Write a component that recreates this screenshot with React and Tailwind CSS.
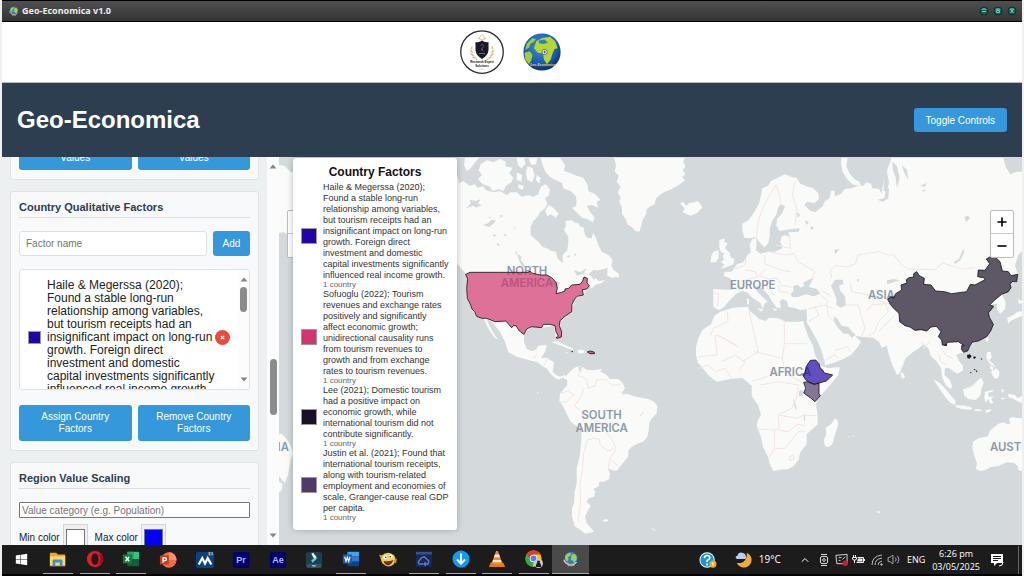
import { useState } from "react";
import { FaWindows } from "react-icons/fa";
import { ChevronUp, Volume2 } from "lucide-react";

const factors = [
  {
    color: "#2204a8",
    text: "Haile & Megerssa (2020); Found a stable long-run relationship among variables, but tourism receipts had an insignificant impact on long-run growth. Foreign direct investment and domestic capital investments significantly influenced real income growth.",
  },
  {
    color: "#d0366f",
    text: "Sofuoglu (2022); Tourism revenues and exchange rates positively and significantly affect economic growth; unidirectional causality runs from tourism revenues to growth and from exchange rates to tourism revenues.",
  },
  {
    color: "#1a1128",
    text: "Lee (2021); Domestic tourism had a positive impact on economic growth, while international tourism did not contribute significantly.",
  },
  {
    color: "#513a6b",
    text: "Justin et al. (2021); Found that international tourism receipts, along with tourism-related employment and economies of scale, Granger-cause real GDP per capita.",
  },
];

// Base land, western half of the canvas
const westLand = [
  "M-20 40L22 62 28 85 40 78 58 92 75 88 82 98 100 94 108 106 130 112 150 108 170 120 182 112 200 112 215 125 235 120 250 126 265 118 272 96 285 88 290 90 300 104 296 122 285 130 292 146 285 160 270 172 262 186 250 198 242 215 242 240 255 252 265 260 278 276 290 280 305 288 318 290 322 310 338 325 338 300 352 285 355 262 355 245 342 226 348 212 346 198 365 195 372 202 385 205 392 216 400 215 405 240 412 248 425 250 430 233 440 255 446 272 455 290 475 300 488 315 485 328 470 340 445 346 430 345 415 358 424 362 430 374 438 370 445 378 465 376 455 385 440 388 425 400 417 392 400 420 375 432 365 470 330 500 335 545 318 550 312 512 275 518 245 515 222 538 222 560 230 582 245 588 258 584 265 572 290 570 287 586 278 602 272 610 290 608 312 622 308 650 318 660 330 665 345 660 356 668 350 674 338 668 326 674 314 668 300 655 292 642 278 634 262 622 246 618 225 612 200 605 175 592 165 560 150 530 125 500 108 490 80 485 60 450 50 425 52 370 47 355 35 342 25 330 10 318-20 300Z",
  "M100 488L110 492 118 512 128 530 138 545 147 556 134 548 122 532 112 515Z",
  "M45 8L88 8 75 22 62 40 50 48 42 30Z",
  "M92 28L110 16 130 22 150 12 168 20 166 34 188 38 178 55 190 68 184 82 168 92 160 108 146 102 128 108 118 94 98 88 84 72 96 60 86 46Z",
  "M200 8L222 8 226 28 214 40 204 30ZM232 34L248 40 254 62 246 82 232 74 228 54ZM200 52L216 60 214 80 200 74ZM236 10L262 8 258 28 244 30ZM204 88L222 92 218 104 206 100ZM260 60L272 68 268 86 258 76Z",
  "M272 8L330 8 345 30 342 48 362 55 380 62 400 68 412 88 415 108 436 118 452 134 440 140 444 158 426 150 410 152 420 170 434 188 428 202 412 192 396 188 378 170 366 158 380 146 378 124 362 108 340 100 336 84 318 76 300 66 286 50 278 30Z",
  "M296 150L310 158 326 176 318 188 302 178 292 184 286 166Z",
  "M472 340L482 325 490 345 505 355 507 368 495 365 488 370 472 362Z",
  "M492 8L498 30 494 50 506 62 500 80 512 95 503 112 512 128 508 140 516 158 516 176 528 194 532 208 548 218 556 228 568 230 574 212 578 195 588 178 590 162 604 152 614 148 618 130 632 118 645 110 665 102 690 88 705 76 696 66 706 58 698 46 706 36 700 20 704 8Z",
  "M690 145L700 140 708 152 718 144 732 142 742 138 750 145 757 158 740 175 722 182 708 176 698 172 704 160Z",
  "M305 560L325 558 345 570 368 580 372 586 350 580 335 572 315 566ZM385 585L398 584 406 592 392 596 382 592ZM346 592L356 593 352 596Z",
  "M350 660L366 644 378 636 392 632 390 646 398 636 410 644 430 646 455 642 452 650 470 660 480 672 505 672 518 684 525 700 514 716 530 716 548 722 562 726 595 732 612 740 622 752 620 775 606 790 598 802 597 822 592 845 580 860 562 866 545 876 536 885 534 905 518 925 500 947 486 946 474 940 480 955 478 972 462 980 448 980 446 994 430 1002 436 1010 432 1025 416 1030 410 1040 422 1052 412 1070 405 1085 410 1104 432 1130 405 1136 388 1122 375 1115 366 1085 366 1060 372 1045 374 1010 380 985 380 940 390 900 394 850 395 820 378 812 362 800 350 776 340 756 328 738 330 716 340 704 352 690Z",
  "M458 1095L470 1092 476 1097 462 1101ZM604 1118L614 1124 616 1129 606 1122ZM262 710L266 714 262 716Z",
  "M808 255L825 250 822 262 833 264 825 280 838 292 843 308 853 312 850 328 832 335 812 342 824 328 812 322 822 314 818 302 824 296 812 290 808 275ZM790 290L806 286 806 310 797 322 781 322 784 302Z",
  "M-515 30L-498 32-484 44-478 52-440 48-440 232-485 238-500 232-515 234Z",
  "M-515 838L-505 836-492 850-478 872-470 895-478 915-486 960-496 985-515 960ZM-513 980L-502 986-506 1008-513 1012Z",
];

// Base land, eastern half
const eastLand = [
  "M-65 402L-10 405-5 385-15 370-35 362-30 350-10 350 6 328 25 322 38 300 48 292 44 268 52 252 62 250 66 268 62 285 76 296 100 290 60 246 45 250 28 248 22 225 22 206 40 196 50 182 60 168 72 145 78 120 82 100 100 92 108 78 128 68 150 58 170 66 184 68 196 86 215 94 235 100 250 115 252 132 238 145 216 140 208 150 226 168 240 172 262 155 270 138 284 130 288 108 298 106 300 124 318 116 330 102 348 100 365 94 385 92 395 82 408 86 412 100 432 102 440 116 448 60 462 30 470 8 805 8 812 36 826 58 845 50 867 50 867 282 850 300 840 330 848 358 845 380 825 388 824 406 800 418 812 440 810 462 796 476 786 464 786 446 772 448 766 462 758 475 775 508 755 545 730 558 708 570 695 592 678 594 664 600 672 618 684 632 684 645 668 656 654 648 640 638 630 640 628 660 645 676 652 696 646 702 632 690 622 668 618 640 606 620 588 604 580 580 566 568 548 582 530 594 512 610 500 640 494 655 486 660 472 630 462 600 455 572 440 578 432 560 415 548 385 546 360 542 378 560 370 574 350 598 325 612 300 622 268 632 256 600 240 570 226 540 214 510 216 490 214 462 196 466 178 458 160 456 156 438 142 432 134 440 138 458 125 458 112 440 100 420 84 402 68 392 62 402 74 418 98 440 88 446 84 462 76 444 52 428 36 412 22 408 4 416-20 440-32 455-48 466-65 456Z",
  "M320 8L338 8 334 34 344 56 358 72 374 82 378 94 352 88 334 70 322 48 318 24Z",
  "M-6 458L40 455 46 470 60 480 72 492 92 498 102 488 130 490 152 500 190 500 206 498 210 516 222 545 236 572 240 598 262 634 280 640 314 636 310 660 292 682 275 702 250 730 243 748 248 780 248 808 232 822 215 838 215 868 196 892 190 915 175 934 160 942 135 944 115 948 104 926 100 908 84 875 78 845 65 812 68 796 78 780 70 752 50 722 50 692 36 680 22 668-15 672-55 680-78 662-92 645-112 622-117 600-117 575-110 550-98 525-72 508-62 482-44 470Z",
  "M300 790L308 796 310 808 300 840 292 868 282 876 270 874 266 856 274 838 272 818 288 808Z",
  "M498 650L506 656 510 666 504 672 497 664Z",
  "M596 674L612 682 630 700 648 722 662 738 660 750 644 742 628 722 610 696ZM662 750L690 752 712 758 708 764 680 762 662 756ZM720 762L742 764 738 768 720 768ZM752 766L770 762 764 770 752 774Z",
  "M740 668L746 684 740 700 736 722 722 735 700 732 688 722 684 702 704 698 718 688 730 674Z",
  "M750 710L778 704 772 710 758 714 762 726 776 724 768 732 776 744 766 746 760 732 752 744 748 726ZM800 700L806 706 804 716 800 708ZM798 728L812 730 800 734Z",
  "M756 590L768 592 770 608 762 616 776 628 784 640 776 634 764 626 754 610ZM768 650L784 640 794 652 790 668 780 672 772 660ZM766 630L776 638 772 648 766 640Z",
  "M820 716L840 720 848 730 867 720 867 745 850 740 836 732 820 726Z",
  "M756 544L762 552 756 562 750 552ZM816 490L836 480 848 470 867 468 867 480 852 486 826 498 820 506ZM848 430L858 438 867 430 867 445 852 446Z",
  "M714 860L730 850 758 844 766 826 775 818 790 806 806 802 816 808 826 806 822 792 832 786 850 790 867 788 867 950 850 945 848 934 838 924 815 922 792 932 766 936 752 945 735 948 722 942 726 926 716 895 712 878Z",
  "M426 1068L436 1070 430 1076ZM340 844L346 846 342 848ZM352 840L358 842 354 845Z",
  "M112 458L128 464 120 468ZM66 460L84 462 80 470ZM36 430L42 432 42 448 36 448Z",
];

// Enclosed seas, lakes and gulfs of the eastern half
const eastWater = [
  "M86 280L100 264 104 244 104 222 112 196 124 180 130 156 138 148 150 154 142 174 126 192 124 212 134 228 170 222 194 220 192 230 160 232 164 246 150 240 140 244 136 258 142 280 120 290 98 290 76 292 66 278 64 262 72 270Z",
  "M166 418L176 408 174 392 190 390 196 398 208 392 204 384 220 374 236 370 226 386 222 396 246 402 256 416 236 424 212 418 190 426 172 426Z",
  "M288 392L300 374 322 374 326 386 312 392 316 408 330 424 332 450 318 458 304 450 304 430 296 410Z",
  "M296 484L306 490 320 512 340 516 352 530 362 540 350 548 340 536 326 536 310 520 298 502Z",
  "M205 502L214 500 226 520 244 552 258 582 268 618 270 634 258 634 240 600 234 572 218 540Z",
  "M448 8L462 8 456 50 462 82 456 110 446 108 446 78 442 40ZM472 20L486 34 494 68 486 100 482 68 474 46ZM500 30L516 44 520 74 508 54Z",
  "M428 134L448 130 454 100 462 100 460 130 444 140Z",
  "M655 322L672 312 682 288 688 280 686 296 676 316 662 326Z",
  "M210 196L222 202 214 210ZM226 212L238 220 228 224ZM186 172L196 180 188 188Z",
  "M456 376L476 372 494 376 476 382 456 388ZM366 372L374 374 368 382ZM298 284L314 282 300 298ZM556 92L574 84 570 96ZM560 106L574 104 566 110ZM688 186L700 182 704 190 694 202Z",
  "M192 708L202 704 204 722 192 724ZM174 730L180 740 186 766 180 760ZM206 776L210 780 210 800 206 794Z",
];

const westWater = [
  "M48 160L62 146 60 134 78 138 92 132 84 146 96 150 78 158 70 152Z",
  "M98 210L116 204 124 194 138 196 130 206 118 216Z",
  "M128 238L140 240 132 246ZM140 264L152 270 142 272ZM160 236L172 240 164 244ZM192 210L198 222 194 220ZM150 180L158 182 152 190ZM116 185L124 186 118 190Z",
  "M202 296L214 304 212 316 222 326 226 338 216 334 208 318ZM196 288L202 292 198 300Z",
  "M330 152L352 140 372 142 380 154 360 160 352 170 342 186 328 174ZM302 100L318 112 310 140 302 130Z",
  "M300 376L330 382 322 400 312 392ZM372 296L380 298 374 304ZM350 304L362 300 356 308Z",
  "M372 344L390 352 410 340 400 356 380 362Z",
  "M386 634L394 638 390 652 386 646ZM518 708L530 712 520 720ZM568 784L584 768 576 780Z",
];

const westBorders =
  "M402 640L382 660 410 672 414 700 436 692 440 674 470 674 486 690 512 690M400 700L396 720 374 752 394 770 402 800 412 836M332 716L352 708 372 720 350 740 330 742M436 796L462 808 470 834 490 860 498 884 480 910 474 938M408 856L430 850 448 852 450 870 474 888 492 880M412 856L400 900 398 940 390 990 392 1040 384 1100M480 912L504 932M262 596L252 612M292 612L282 632M790 412L806 416 802 456M832 470L834 500 790 520 780 545M800 540L860 570";
const eastBorders =
  "M-52 540L10 576M-60 540L-54 600-110 605M-110 640L-80 630-60 650-30 640-10 670M-40 620L0 600 30 620 10 650M40 460L54 520 70 590 20 620M148 500L148 566 216 566M148 570L142 610 60 590M142 610L150 650 110 660 50 680M160 660L200 680M76 690L130 680 190 690 184 730 170 760 150 770 130 780 132 820 120 825 64 822M132 780L184 790 210 780 246 782M118 826L118 880 104 906M118 880L150 880 190 830 210 830M130 825L160 830 186 808 210 812M162 908L174 900 178 912 166 916ZM66 256L66 230 72 190 88 150 110 110 124 90M124 90L136 128 136 148M180 210L186 160 172 120 180 80M0 342L30 330 34 310M30 345L60 350 68 366 20 378M90 300L90 326 140 346 168 350M100 290L150 300 176 296 190 320 240 350 230 372M124 270L166 280 164 240M90 344L72 362 100 372 128 370 140 392 170 396M100 372L96 400 120 420M130 392L134 410 160 412M256 404L290 424M256 418L280 440 272 450 292 460M220 462L240 456 276 450 280 484 300 500M240 456L252 480 220 500M290 370L286 346 300 332 340 336 362 326 368 300 430 290 460 300 478 300 500 330 520 342M346 384L350 410 400 420 440 440 470 450M330 450L370 450 378 480 390 520 380 545M390 470L410 450 450 446 460 470 430 500 420 530 400 545M430 530L460 500 480 480M520 342L600 344 622 324 680 342 720 338M240 630L300 600 312 610M300 585L340 575 346 590M560 560L568 580 584 560M620 580L632 600 654 610M612 600L616 620 636 630M690 700L710 692 724 680";

function MapCanvas() {
  return (
    <svg
      className="absolute inset-0 h-full w-full"
      viewBox="-513 6 2229 1164"
      preserveAspectRatio="xMidYMid slice"
      role="img"
      aria-label="World map"
    >
      <rect x="-1000" y="-500" width="4000" height="2400" fill="#d4dadc" />
      <g fill="#fafaf8" strokeLinejoin="round">
        {westLand.map((d) => (
          <path key={d} d={d} />
        ))}
        <g transform="translate(855 0)">
          {eastLand.map((d) => (
            <path key={d} d={d} />
          ))}
        </g>
      </g>
      <g fill="#d4dadc">
        {westWater.map((d) => (
          <path key={d} d={d} />
        ))}
        <g transform="translate(855 0)">
          {eastWater.map((d) => (
            <path key={d} d={d} />
          ))}
        </g>
      </g>
      <g fill="none" stroke="#f3e4e4" strokeWidth="3" strokeLinejoin="round">
        <path d={westBorders} />
        <path d={eastBorders} transform="translate(855 0)" />
      </g>

      <g className="font-['Inter',sans-serif] font-semibold" fontSize="34" fill="#8a9ba8" textAnchor="middle">
        <text x="231" y="359">NORTH</text>
        <text x="231" y="397">AMERICA</text>
        <text x="455" y="792">SOUTH</text>
        <text x="455" y="830">AMERICA</text>
        <text x="908" y="401">EUROPE</text>
        <text x="1294" y="433">ASIA</text>
        <text x="1021" y="664">AFRICA</text>
        <text x="1620" y="889" textAnchor="start">AUSTRALIA</text>
        <text x="-483" y="889" textAnchor="end">AUSTRALIA</text>
      </g>

      {/* Countries with an assigned factor */}
      <g stroke="#111" strokeWidth="3" strokeOpacity="0.8" fillOpacity="0.7" strokeLinejoin="round">
        <g fill="#d0366f">
          <path d="M47 358L60 352 235 352 240 348 245 354 270 360 290 360 305 368 318 382 322 400 318 416 335 412 345 408 345 402 356 400 365 390 390 388 398 378 402 366 412 370 411 384 418 392 410 402 397 404 400 420 382 424 375 430 366 448 365 470 345 484 330 497 328 512 335 530 334 546 322 550 318 548 325 544 318 530 315 512 300 508 280 508 275 518 245 515 230 522 222 538 208 528 198 512 190 512 185 518 176 508 168 498 135 500 110 490 96 490 80 484 74 470 66 462 62 450 52 430 50 400 53 372Z" />
          <path d="M412 591L420 588 432 591 434 596 420 596Z" />
        </g>
        <path
          fill="#1a1128"
          transform="translate(855 0)"
          d="M458 433L466 426 478 426 482 416 500 405 498 390 516 384 514 374 522 368 536 366 536 356 545 350 553 362 568 370 566 388 588 390 602 408 628 410 650 416 695 410 706 388 720 390 750 374 746 368 728 365 730 345 750 346 764 326 754 312 766 305 782 307 795 320 802 348 820 350 828 362 848 358 845 380 832 380 825 388 828 398 820 410 800 418 778 436 764 450 776 454 770 462 760 474 764 488 775 508 768 526 755 545 730 558 712 562 704 574 698 588 686 592 680 584 680 572 688 572 670 560 636 562 634 572 622 570 620 555 610 545 618 530 604 514 588 516 575 528 558 524 540 526 525 516 510 512 494 500 492 475 478 462 466 448Z"
        />
        <path
          fill="#2204a8"
          transform="translate(855 570)"
          d="M226 46L242 45 252 56 256 70 262 74 268 84 293 90 274 108 252 114 238 118 224 114 212 104 203 90 210 82 214 64Z"
        />
        <path
          fill="#513a6b"
          transform="translate(855 570)"
          d="M206 112L220 110 238 118 252 114 252 146 256 152 240 170 226 158 206 144 212 130Z"
        />
      </g>
      <g fill="#1c1826" transform="translate(855 0)">
        <path d="M696 600l8-2 6 5-6 8-7-2zM714 606l6-2 3 4-6 4zM737 610l5 1-2 4zM706 650l4 2-3 4zM715 644l5-3 1 5zM722 646l6 2-4 4zM628 568l8 0-2 5z" />
        <path d="M-490 588l4 0-1 4-4-1z" />
      </g>
    </svg>
  );
}

function GlobeIcon({ className }) {
  return (
    <svg className={className} viewBox="0 0 20 20" aria-hidden="true">
      <circle cx="10" cy="9" r="8" fill="#2f7fd0" />
      <path d="M3 6c2-3 5-4 7-3l-1 3-3 2 1 3-2 2c-2-1-3-4-2-7zM11 4l4 0 2 3 0 4-3 4-2-3-2-1 0-3z" fill="#a5cf4a" />
      <path d="M1 11c2 6 11 9 16 3" fill="none" stroke="#d9dde0" strokeWidth="1.4" />
      <path d="M6 18h8" stroke="#c9a24a" strokeWidth="2" />
    </svg>
  );
}

function TitleBar() {
  const dots = [
    { label: "Minimize", d: "M3 5.5h4" },
    { label: "Maximize", d: "M3.5 4.5h3v2h-3z" },
    { label: "Close", d: "M3.5 3.5l3 3.5M6.5 3.5l-3 3.5" },
  ];
  return (
    <div className="flex h-[22px] shrink-0 items-center border-y border-black bg-linear-to-b from-[#505050] to-[#343434] pr-[5px] pl-[7px]">
      <GlobeIcon className="mr-[3px] size-[10px]" />
      <span className="font-['Noto_Sans',sans-serif] text-[9px] font-bold text-[#ececec]">Geo-Economica v1.0</span>
      <div className="ml-auto flex gap-1">
        {dots.map((dot) => (
          <button key={dot.label} aria-label={dot.label} className="size-[10px]">
            <svg viewBox="0 0 10 10" className="size-full">
              <circle cx="5" cy="5" r="4" fill="#14604f" stroke="#0b2f2a" />
              <path d="M2 3.5a4 3 0 0 1 6 0z" fill="#a8e3d5" />
              <path d={dot.d} stroke="#6fd3bd" strokeWidth="1" fill="none" />
            </svg>
          </button>
        ))}
      </div>
    </div>
  );
}

function Logos() {
  return (
    <div className="flex h-[60px] shrink-0 items-center justify-center gap-[19px] bg-white pr-[3px]">
      <svg className="size-[44px]" viewBox="0 0 88 88" role="img" aria-label="Research Expert Solutions">
        <circle cx="44" cy="44" r="42.5" fill="#fff" stroke="#26262c" strokeWidth="2.5" />
        <g fill="none" stroke="#e2bd8d" strokeWidth="3" strokeLinecap="round">
          <path d="M24 34c-4 10 0 20 10 25M64 34c4 10 0 20-10 25" strokeDasharray="3 4" />
          <path d="M20 40l6 5M21 48l7 3M25 55l7 1M68 40l-6 5M67 48l-7 3M63 55l-7 1" strokeWidth="2" />
          <path d="M38 18l3-6 3-3 3 3 3 6M36 16l8 4 8-4" strokeWidth="2" />
        </g>
        <path d="M31 24q7 2 13-3 6 5 13 3v16q-1 11-13 18-12-7-13-18z" fill="#1b1a22" />
        <path d="M41 31l4-3 2 5-4 6 3 4" fill="none" stroke="#5a55b5" strokeWidth="1.5" />
        <path d="M43 38l3 2" stroke="#d4485c" strokeWidth="2" />
        <path d="M39 47h2M43 47h2M47 47h2" stroke="#e2bd8d" strokeWidth="2" />
        <g className="font-['Liberation_Sans',sans-serif] font-bold" fontSize="6" textAnchor="middle" fill="#111">
          <text x="44" y="66">Research Expert</text>
          <text x="44" y="73">Solutions</text>
        </g>
        <path d="M41 78h6" stroke="#efa0bb" strokeWidth="1.5" />
      </svg>
      <svg className="size-[38px]" viewBox="0 0 100 100" role="img" aria-label="Geo-Economica logo">
        <defs>
          <radialGradient id="sea" cx="0.45" cy="0.35" r="0.65">
            <stop offset="0" stopColor="#3d92dc" />
            <stop offset="0.7" stopColor="#175ab0" />
            <stop offset="1" stopColor="#0c2f66" />
          </radialGradient>
        </defs>
        <circle cx="50" cy="50" r="49" fill="url(#sea)" />
        <path d="M35 22l16-9 20-3 14 12 6 18-8 2-6 14-4 14-10 12-8-12-2-16-14-2-10-12z" fill="#b6d732" />
        <path d="M10 28l14-14 10 2-6 8-8 4-4 10-10 6zM4 52l14-4 7 10-3 14-6 10-10-12z" fill="#a3cd30" />
        <path d="M42 20l14-3 10 8-12 4-12-2z" fill="#2c7fc8" />
        <circle cx="57" cy="50" r="7" fill="#e8edf2" stroke="#4b5a66" strokeWidth="2" />
        <path d="M57 46v8M54 50h6" stroke="#34414c" strokeWidth="2" />
        <text x="52" y="86" fontSize="9" textAnchor="middle" fill="#f1cf62" className="font-['Liberation_Sans',sans-serif] font-bold">
          Geo-Economica
        </text>
      </svg>
    </div>
  );
}

function Card({ title, children }) {
  return (
    <section className="rounded-[3px] border border-[#dfe3e6] bg-[#f8f9fb] px-2 py-[9px]">
      {title && (
        <h2 className="mb-[13px] border-b border-[#dcdfe2] pb-[3px] text-[11px] leading-[13px] font-bold text-[#2c3e50]">{title}</h2>
      )}
      {children}
    </section>
  );
}

function BlueButton({ children }) {
  return (
    <button className="h-9 flex-1 rounded-[3px] bg-[#3498db] px-4 text-[10px] leading-3 text-white hover:bg-[#2980b9]">
      {children}
    </button>
  );
}

function Arrow({ up }) {
  return (
    <svg viewBox="0 0 8 5" className="h-[5px] w-2" aria-hidden="true">
      <path d={up ? "M0.5 4.5h7L4 0.5z" : "M0.5 0.5h7L4 4.5z"} fill="#858585" />
    </svg>
  );
}

function FactorList() {
  return (
    <div className="mb-[15px] flex h-[121px] overflow-hidden rounded-[3px] border border-[#dfe3e6] bg-white">
      <ul className="flex-1 px-2 pt-[9px]">
        {factors.slice(0, 1).map((f) => (
          <li key={f.text} className="flex items-center">
            <span className="mr-1.5 size-[13px] shrink-0 border border-[#999]" style={{ background: f.color }} />
            <span className="flex-1 text-xs leading-[13px] text-[#222]">{f.text}</span>
            <button aria-label="Remove factor" className="flex size-[15px] shrink-0 items-center justify-center rounded-full bg-[#e74c3c]">
              <svg viewBox="0 0 6 6" className="size-[5px]">
                <path d="M1 1l4 4M5 1l-4 4" stroke="#fff" strokeWidth="1.5" />
              </svg>
            </button>
          </li>
        ))}
      </ul>
      <div className="flex w-[11px] flex-col items-center bg-[#fcfcfc] py-[7px]">
        <Arrow up />
        <div className="mt-[5px] h-[25px] w-[7px] rounded-full bg-[#8b8b8b]" />
        <div className="mt-auto">
          <Arrow />
        </div>
      </div>
    </div>
  );
}

function Sidebar() {
  const [name, setName] = useState("");
  const [category, setCategory] = useState("");

  return (
    <aside className="flex w-[277px] shrink-0 bg-[#ecf0f1]">
      <div className="flex-1 overflow-hidden px-2">
        <div className="-mt-[33px] flex flex-col gap-[11px]">
          <Card>
            <div className="flex gap-1.5">
              <BlueButton>Assign Country Values</BlueButton>
              <BlueButton>Remove Country Values</BlueButton>
            </div>
          </Card>

          <Card title="Country Qualitative Factors">
            <div className="mb-[13px] flex gap-1.5">
              <input
                aria-label="Factor name"
                placeholder="Factor name"
                value={name}
                onChange={(e) => setName(e.target.value)}
                className="h-[25px] min-w-0 flex-1 rounded-[3px] border border-[#dddfe2] bg-white px-1.5 text-[10px] placeholder:text-[#757575]"
              />
              <button className="h-[25px] w-[37px] rounded-[3px] bg-[#3498db] text-[10px] text-white">Add</button>
            </div>
            <FactorList />
            <div className="flex gap-1.5">
              <BlueButton>Assign Country Factors</BlueButton>
              <BlueButton>Remove Country Factors</BlueButton>
            </div>
          </Card>

          <Card title="Region Value Scaling">
            <input
              aria-label="Value category"
              placeholder="Value category (e.g. Population)"
              value={category}
              onChange={(e) => setCategory(e.target.value)}
              className="mb-1.5 block h-4 w-full rounded-[1px] border border-[#767676] bg-white px-0.5 text-[10px] placeholder:text-[#757575]"
            />
            <div className="flex items-center text-[10px] text-[#222]">
              <label htmlFor="min-color">Min color</label>
              <input id="min-color" type="color" defaultValue="#ffffff" className="mr-[7px] ml-[3px] h-[27px] w-[25px] border border-[#d5d5d5] bg-[#efefef]" />
              <label htmlFor="max-color">Max color</label>
              <input id="max-color" type="color" defaultValue="#0000ff" className="ml-[3px] h-[27px] w-[25px] border border-[#d5d5d5] bg-[#efefef]" />
            </div>
          </Card>
        </div>
      </div>
      <div className="flex w-3 flex-col items-center bg-[#fbfbfb] py-[7px]">
        <Arrow up />
        <div className="mt-[190px] h-14 w-[7px] rounded-full bg-[#8b8b8b]" />
        <div className="mt-auto">
          <Arrow />
        </div>
      </div>
    </aside>
  );
}

function Legend() {
  return (
    <div className="absolute top-px left-3.5 w-[164px] rounded-[3px] bg-white px-2 pt-1.5 pb-2 shadow-[0_0_6px_rgba(0,0,0,0.25)]">
      <h2 className="mb-0.5 text-center text-xs leading-4 font-bold text-[#111]">Country Factors</h2>
      <ul>
        {factors.map((f) => (
          <li key={f.text} className="flex items-center gap-1.5">
            <span className="size-4 shrink-0 border border-[#999]" style={{ background: f.color }} />
            <div className="flex-1 text-[9px] leading-[11px] text-[#333]">
              <p>{f.text}</p>
              <p className="text-[8px] leading-2 text-[#666]">1 country</p>
            </div>
          </li>
        ))}
      </ul>
    </div>
  );
}

function ZoomControl({ className }) {
  return (
    <div className={`absolute top-[53px] flex w-6 flex-col rounded-[2px] border border-[#b9bdbe] bg-white ${className}`}>
      <button aria-label="Zoom in" className="flex h-[23px] items-center justify-center border-b border-[#ccc]">
        <svg viewBox="0 0 10 10" className="size-[10px]">
          <path d="M0.5 5h9M5 0.5v9" stroke="#000" strokeWidth="1.6" />
        </svg>
      </button>
      <button aria-label="Zoom out" className="flex h-[23px] items-center justify-center">
        <svg viewBox="0 0 10 10" className="size-[10px]">
          <path d="M0.5 5h9" stroke="#000" strokeWidth="1.6" />
        </svg>
      </button>
    </div>
  );
}

const apps = [
  {
    label: "File Explorer",
    open: true,
    icon: (
      <>
        <path d="M1 3h7l2 2h8v13H1z" fill="#e9a825" />
        <path d="M1 7h17v10H1z" fill="#fcd667" />
        <path d="M4 18v-6q0-1.5 1.5-1.5h8q1.5 0 1.5 1.5v6h-3v-4H7v4z" fill="#3c8fd6" />
      </>
    ),
  },
  {
    label: "Opera",
    open: true,
    icon: (
      <>
        <circle cx="10" cy="10" r="9" fill="#e8192c" />
        <ellipse cx="10" cy="10" rx="4" ry="6.5" fill="#1c1c1c" />
        <path d="M13 3.5q6 6 0 13 6-2 6-6.5t-6-6.5z" fill="#a70014" />
      </>
    ),
  },
  {
    label: "Excel",
    open: true,
    icon: (
      <>
        <path d="M6 2h13v8H6z" fill="#33c481" />
        <path d="M6 2h7v8H6z" fill="#21a366" />
        <path d="M6 10h13v8H6z" fill="#185c37" />
        <path d="M1 5h10v10H1z" fill="#107c41" />
        <path d="M4 7.5l4 5M8 7.5l-4 5" stroke="#fff" strokeWidth="1.5" />
      </>
    ),
  },
  {
    label: "PowerPoint",
    icon: (
      <>
        <circle cx="11" cy="10" r="8.5" fill="#ed6c47" />
        <path d="M11 1.5A8.5 8.5 0 0 1 19.5 10H11z" fill="#ff8f6b" />
        <path d="M1 5h10v10H1z" fill="#c43e1c" />
        <path d="M4.5 13V7.5h2q1.8 0 1.8 1.6t-1.8 1.6h-2" stroke="#fff" strokeWidth="1.5" fill="none" />
      </>
    ),
  },
  {
    label: "Maps",
    icon: (
      <>
        <rect x="0" y="1" width="20" height="18" rx="2" fill="#0b3f87" />
        <path d="M3 15l4-7 3 6 3-6 4 7" stroke="#fff" strokeWidth="2.5" fill="none" />
        <path d="M14 1h2v4h-2z" fill="#f2a83b" />
        <path d="M17 1h2v4h-2z" fill="#4aa6ef" />
      </>
    ),
  },
  {
    label: "Premiere Pro",
    icon: (
      <>
        <rect x="1" y="1" width="18" height="18" rx="3" fill="#00006b" />
        <text x="10" y="13" fontSize="10" textAnchor="middle" fill="#b3b3ff" className="font-semibold">Pr</text>
      </>
    ),
  },
  {
    label: "After Effects",
    icon: (
      <>
        <rect x="1" y="1" width="18" height="18" rx="3" fill="#00006b" />
        <text x="10" y="13" fontSize="10" textAnchor="middle" fill="#b3b3ff" className="font-semibold">Ae</text>
      </>
    ),
  },
  {
    label: "Filmora",
    icon: (
      <>
        <rect x="1" y="1" width="18" height="18" rx="3" fill="#1f3d50" />
        <path d="M7 3l2-1 4 5-3 2z" fill="#eafcf8" />
        <path d="M13 7l0 2-5 4-1-3z" fill="#4ddcc4" />
        <path d="M2 14.5h16v2q0 2-2 2H4q-2 0-2-2z" fill="#2f566b" />
        <path d="M8 16.5h4" stroke="#cde" strokeWidth="1.2" />
      </>
    ),
  },
  {
    label: "Word",
    open: true,
    icon: (
      <>
        <path d="M6 2h13v5H6z" fill="#41a5ee" />
        <path d="M6 7h13v6H6z" fill="#2b7cd3" />
        <path d="M6 13h13v5H6z" fill="#103f91" />
        <path d="M1 5h10v10H1z" fill="#185abd" />
        <path d="M3 7.5l1.5 5L6 8l1.5 4.5 1.5-5" stroke="#fff" strokeWidth="1.3" fill="none" />
      </>
    ),
  },
  {
    label: "Smiley",
    icon: (
      <>
        <path d="M3 5q7-6 14 0 3 5-1 10-6 5-12-1-3-4-1-9z" fill="#e8cf5e" />
        <path d="M0 4l4 1-2 4zM16 11l4-3-1 6z" fill="#c9962e" />
        <circle cx="7" cy="7" r="2.2" fill="#fff" />
        <circle cx="13" cy="6" r="2.2" fill="#fff" />
        <circle cx="7.5" cy="7" r="0.9" fill="#222" />
        <circle cx="12.5" cy="6.5" r="0.9" fill="#222" />
        <path d="M5 11q6 1 11-1-2 6-6 6-4-1-5-5z" fill="#7c2d18" />
      </>
    ),
  },
  {
    label: "Cloud Sync",
    open: true,
    icon: (
      <>
        <path d="M1 2h18v17H1z" fill="#1c2557" />
        <path d="M1 2h18v3H1z" fill="#34508d" />
        <path d="M9 15.5H4.5l-1-2 4-5 3-1 5 5-1 3h-4M12 13.5l-2 2 2 2" stroke="#5a80b6" strokeWidth="1.5" fill="none" />
      </>
    ),
  },
  {
    label: "Downloader",
    open: true,
    icon: (
      <>
        <circle cx="10" cy="10" r="9.5" fill="#0f9bf7" />
        <path d="M10 4v11M5.5 10.5L10 15l4.5-4.5" stroke="#fff" strokeWidth="2.2" fill="none" />
      </>
    ),
  },
  {
    label: "VLC",
    open: true,
    icon: (
      <>
        <path d="M3 14h14l2 5H1z" fill="#e8780c" />
        <path d="M9 1h2l5 14q-6 3-12 0z" fill="#f58a1f" />
        <path d="M7.6 5h4.8l1 3H6.6zM5.6 11h8.8l0.8 2.5H4.8z" fill="#eee" />
      </>
    ),
  },
  {
    label: "Chrome",
    open: true,
    icon: (
      <>
        <circle cx="9.5" cy="9.5" r="9" fill="#fbc116" />
        <path d="M1.7 5A9 9 0 0 1 17.3 5H9.5L5.5 11.5z" fill="#e33b2e" />
        <path d="M1.7 5l4 7 4 1.5-1.5 5A9 9 0 0 1 1.7 5z" fill="#2da94f" />
        <circle cx="9.5" cy="9.5" r="4.2" fill="#fff" />
        <circle cx="9.5" cy="9.5" r="3.3" fill="#4285f4" />
        <circle cx="15" cy="15" r="5" fill="#c8ccd0" />
        <path d="M12 19q0-5 3-5t3 5zM13.5 12h3v3h-3z" fill="#1b1b1b" />
      </>
    ),
  },
];

function Tray() {
  return (
    <div className="ml-auto flex items-center font-['Open_Sans',sans-serif] text-[10px] text-white">
      <svg viewBox="0 0 20 20" className="mr-[18px] size-[18px]" role="img" aria-label="Help">
        <circle cx="9" cy="10" r="8.5" fill="#fff" />
        <circle cx="9" cy="10" r="7.5" fill="#1593d6" />
        <path d="M6 8q0-3 3-3t3 2.5q0 2-3 3v2M9 14v2" stroke="#fff" strokeWidth="1.8" fill="none" />
        <circle cx="15.5" cy="14.5" r="4" fill="#f6a821" />
        <path d="M15.5 12.5v4" stroke="#fff" strokeWidth="1.2" />
      </svg>
      <svg viewBox="0 0 20 20" className="mr-1.5 size-[18px]" role="img" aria-label="Weather">
        <path d="M13 2a8.5 8.5 0 1 1-11 11c7 2 12-4 11-11z" fill="#f3a93c" />
        <path d="M2 9q-3-3 1-4 1-4 5-3 4 1 4 4 1 2-1 3z" fill="#b9d0f2" />
      </svg>
      <span className="mr-[18px]">19°C</span>
      <ChevronUp className="mr-[7px] size-3" />
      <svg viewBox="0 0 12 14" className="mr-[5px] h-3.5 w-3" fill="none" stroke="#ddd" aria-hidden="true">
        <path d="M3 1.5h6M3 12.5h6" />
        <rect x="2.5" y="3.5" width="7" height="7" rx="1.5" />
        <circle cx="6" cy="7" r="1.3" />
      </svg>
      <svg viewBox="0 0 14 14" className="mr-1 size-[13px]" fill="none" stroke="#ddd" aria-hidden="true">
        <path d="M1 2.5l12-1v10H2z M4 5h3M4 8h2M8 7l3-3" />
        <circle cx="11" cy="11" r="3" fill="#e11424" stroke="none" />
      </svg>
      <svg viewBox="0 0 13 13" className="mr-1.5 size-[13px]" fill="none" stroke="#eee" aria-hidden="true">
        <path d="M1.5 2v2M3.5 2v2M0.5 4.5h4v1.5q0 1-2 1-2 0-2-1zM2.5 7v3" />
        <path d="M5.5 4.5h6v5h-7" />
        <path d="M6 5.5h4.5v3H5zM12 6h1v2h-1z" fill="#eee" stroke="none" />
      </svg>
      <svg viewBox="0 0 12 12" className="mr-1 size-3" fill="none" stroke="#bbb" aria-hidden="true">
        <path d="M1 11Q1 2 11 1M4 11q0-6 7-7M7 11q0-3 4-4" />
        <circle cx="10.5" cy="10.5" r="0.8" fill="#bbb" />
      </svg>
      <Volume2 className="mr-[7px] size-[13px] text-[#ccc]" strokeWidth={1.5} />
      <span className="mr-[7px] text-[9px]">ENG</span>
      <div className="text-center text-[9px] leading-[13px]">
        <p>6:26 pm</p>
        <p>03/05/2025</p>
      </div>
      <svg viewBox="0 0 14 14" className="mr-3.5 ml-2.5 size-[14px]" role="img" aria-label="Notifications">
        <path d="M1 1h12v9H7l-3 3v-3H1z" fill="#fff" />
        <path d="M3 3.5h8M3 5.5h8M3 7.5h5" stroke="#1c1c1c" />
        <path d="M9 13q4 0 4-4" stroke="#fff" fill="none" />
      </svg>
      <span className="mr-[3px] h-7 w-px bg-[#666]" />
    </div>
  );
}

function Taskbar() {
  return (
    <footer className="flex h-[31px] shrink-0 border-b-2 border-black bg-[#1c1c1c]">
      <button aria-label="Start" className="flex w-[38px] items-center justify-center text-white">
        <FaWindows className="size-[13px]" />
      </button>
      <div className="flex w-[549px]">
        {apps.map((app) => (
          <button key={app.label} aria-label={app.label} className="flex flex-1 flex-col items-center">
            <svg viewBox="0 0 20 20" className="my-auto size-[18px]">
              {app.icon}
            </svg>
            {app.open && <span className="h-px w-[30px] bg-[#76b9ed]" />}
          </button>
        ))}
        <button aria-label="Geo-Economica" className="flex flex-1 flex-col items-center bg-[#4a4a4a]">
          <GlobeIcon className="my-auto size-4" />
          <span className="h-px w-full bg-[#76b9ed]" />
        </button>
      </div>
      <Tray />
    </footer>
  );
}

export default function App() {
  const [showControls, setShowControls] = useState(true);

  return (
    <div className="flex h-screen flex-col bg-[#f0f0f0] px-0.5 font-['Liberation_Sans',Arial,sans-serif]">
      <TitleBar />
      <Logos />
      <header className="flex h-[75px] shrink-0 items-center justify-between border-t border-[#b8bcc0] bg-[#2c3e50] px-[15px]">
        <h1 className="text-2xl font-bold text-white">Geo-Economica</h1>
        <button
          onClick={() => setShowControls(!showControls)}
          className="h-6 rounded-[3px] bg-[#3498db] px-3 text-[10px] text-white"
        >
          Toggle Controls
        </button>
      </header>

      <main className="flex min-h-0 flex-1">
        {showControls && <Sidebar />}
        <div className="relative flex-1 overflow-hidden bg-[#d4dadc]">
          <MapCanvas />
          <ZoomControl className="left-2" />
          <Legend />
          <ZoomControl className="right-2" />
        </div>
      </main>

      <Taskbar />
    </div>
  );
}
